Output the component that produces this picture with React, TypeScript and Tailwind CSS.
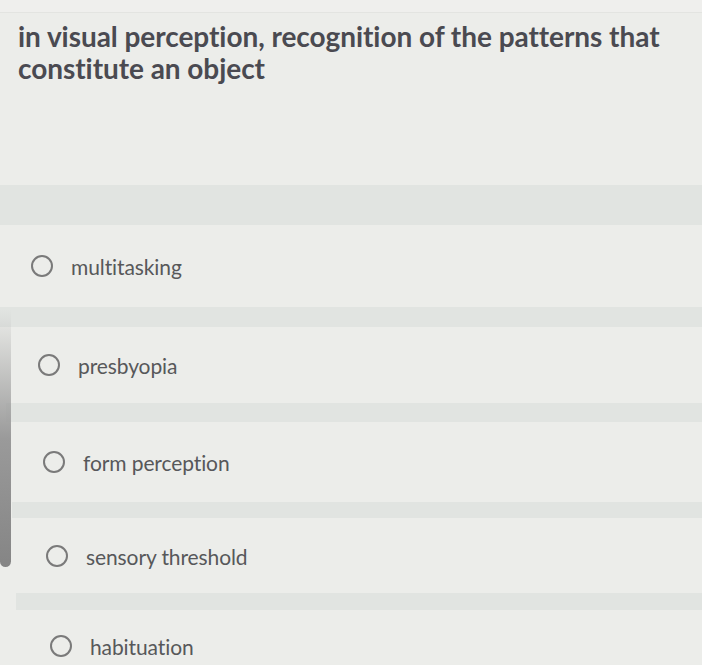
import React from "react";

interface Option {
  label: string;
  height: string;
  indent: string;
  band: string;
}

const options: Option[] = [
  { label: "multitasking", height: "h-[82px]", indent: "pl-[31px]", band: "h-[20px] ml-0" },
  { label: "presbyopia", height: "h-[76px]", indent: "pl-[38px]", band: "h-[19px] ml-[6px]" },
  { label: "form perception", height: "h-[80px]", indent: "pl-[43px]", band: "h-[16px] ml-[12px]" },
  { label: "sensory threshold", height: "h-[75px]", indent: "pl-[46px]", band: "h-[17px] ml-[16px]" },
  { label: "habituation", height: "h-[72px]", indent: "pl-[50px]", band: "" },
];

function App() {
  return (
    <div
      className="relative w-[702px] h-[665px] overflow-hidden bg-[#ecedea]"
      style={{ fontFamily: "Lato, 'Open Sans', sans-serif" }}
    >
      <div className="h-[13px] bg-[#efefed] border-b border-[#e3e4e1]" />

      <div className="h-[172px] pl-[18px] pr-2 pt-[7px]">
        <h1 className="text-[28px] leading-[32px] font-bold text-[#4a4a51] tracking-[-0.05px]">
          in visual perception, recognition of the patterns that
          <br />
          constitute an object
        </h1>
      </div>

      <div className="h-[40px] bg-[#e1e4e1]" />

      {options.map((opt, i) => (
        <div key={opt.label}>
          <label
            className={`flex items-center gap-[18px] cursor-pointer ${opt.height} ${opt.indent}`}
          >
            <span className="w-[22px] h-[22px] rounded-full border-[2.5px] border-[#7a7a7a] shrink-0" />
            <span className="text-[21px] text-[#57585a] tracking-[-0.1px] pt-[2px]">
              {opt.label}
            </span>
          </label>
          {i < options.length - 1 && (
            <div className={`bg-[#e1e4e1] ${opt.band}`} />
          )}
        </div>
      ))}

      <div className="absolute left-0 top-[310px] w-[11px] h-[257px] rounded-b-full bg-gradient-to-b from-transparent via-[#9a9a9a] to-[#858585]" />
    </div>
  );
}

export default App;
